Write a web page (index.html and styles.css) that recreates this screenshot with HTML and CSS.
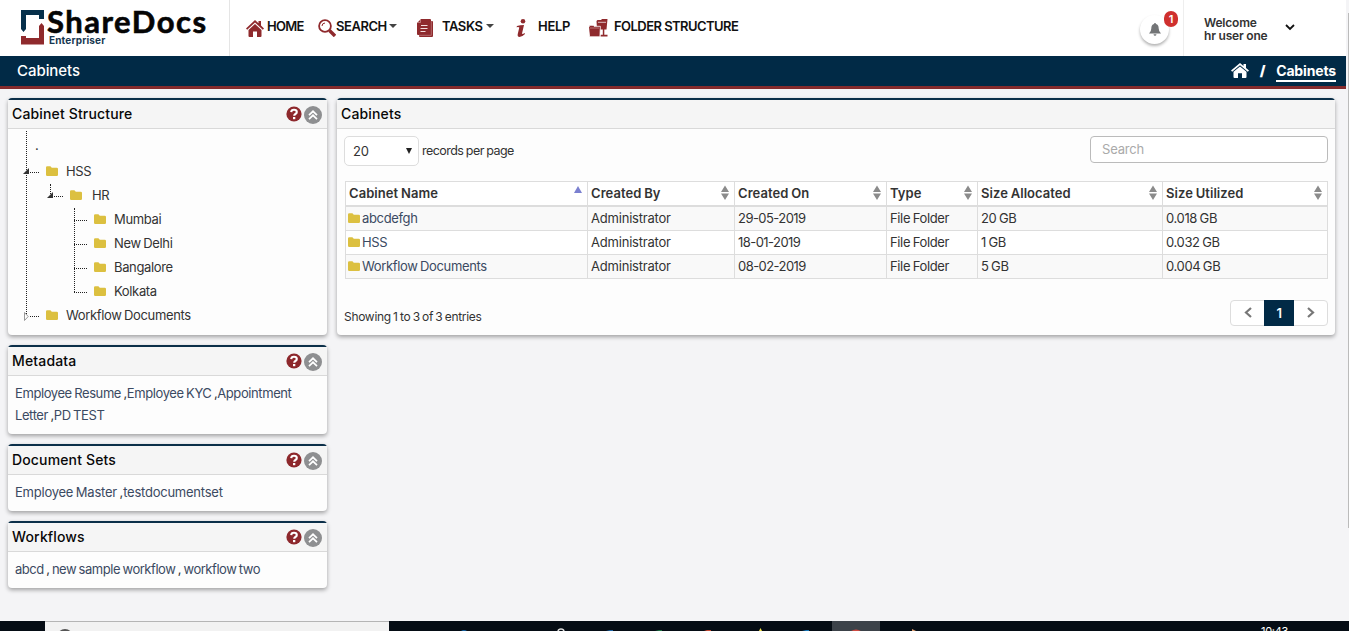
FILE: index.html
```html
<!DOCTYPE html>
<html lang="en">
<head>
	<meta charset="utf-8">
	<title>ShareDocs Enterpriser</title>
	<link rel="stylesheet" href="styles.css">
</head>
<body>
	<!-- shared icons -->
	<svg class="sprite">
		<symbol id="folder" viewBox="0 0 12 10"><path d="M0 1.5Q0 .3 1.2 .3H4.4L5.8 1.7H10.8Q12 1.7 12 2.9V8.8Q12 10 10.8 10H1.2Q0 10 0 8.8Z" fill="#dcc040"/></symbol>
		<symbol id="home" viewBox="0 0 18 17"><path d="M9 0L12.5 3.3V1H15V5.6L18 8.5L16.8 9.8L9 2.6L1.2 9.8L0 8.5Z"/><path d="M9 4L15.5 10V16Q15.5 17 14.5 17H11V11.5H7V17H3.5Q2.5 17 2.5 16V10Z"/></symbol>
		<symbol id="question" viewBox="0 0 16 16"><circle cx="8" cy="8" r="7.6" fill="#8d282c"/><path d="M5.2 6.1Q5.3 3.7 8 3.7T10.8 6Q10.8 7.2 9.4 8Q8.2 8.7 8.2 9.8" fill="none" stroke="#fff" stroke-width="2.1"/><rect x="7" y="11" width="2.3" height="2.2" fill="#fff"/></symbol>
		<symbol id="collapse" viewBox="0 0 18 18"><circle cx="9" cy="9" r="9" fill="#8e8f91"/><path d="M5 9.2L9 5.3L13 9.2M5 13.2L9 9.3L13 13.2" fill="none" stroke="#fff" stroke-width="1.7"/></symbol>
		<symbol id="sort" viewBox="0 0 8 14"><path d="M4 0L8 6.5H0ZM0 8H8L4 14.5Z" fill="#8b8b8b"/></symbol>
	</svg>

	<div class="page">
		<div class="header">
			<div class="logo">
				<svg width="24" height="35" viewBox="0 0 24 35"><path d="M0 0H23V9H18V5H5V19L2.500 22L0 19Z" fill="#06304b"/><path d="M18 16L20.500 13L23 16V34.500H0V26H5V28H18Z" fill="#8f2a2d"/></svg>
				<div>
					<div class="logo-name">ShareDocs</div>
					<div class="logo-sub">Enterpriser</div>
				</div>
			</div>
			<ul class="nav">
				<li><svg class="nav-icon" width="18" height="17"><use href="#home"/></svg><span class="t-home">HOME</span></li>
				<li><svg class="nav-icon" width="18" height="18" viewBox="0 0 18 18"><circle cx="7" cy="7" r="5.9" fill="none" stroke="#8f2a2d" stroke-width="1.8"/><path d="M4 7Q4 4.200 7 4" fill="none" stroke="#8f2a2d"/><path d="M11.500 11.500L17 17" stroke="#8f2a2d" stroke-width="3.400"/></svg><span class="t-search">SEARCH</span><i class="caret"></i></li>
				<li><svg class="nav-icon" width="16" height="18" viewBox="0 0 16 18"><path d="M4 0H13Q14 0 14 1V2H15Q16 2 16 3V17Q16 18 15 18H3Q2 18 2 17V16H1Q0 16 0 15V4Z"/><path d="M14.300 2V16.300H2" fill="none" stroke="#d9a9aa" stroke-width=".5"/><path d="M4 6.500H10.500M3.500 9.500H10.500M3.500 12.500H8.500" fill="none" stroke="#f3dede"/><path d="M3.500 .5V3.500H.5" fill="none" stroke="#d9a9aa" stroke-width=".6"/></svg><span class="t-tasks">TASKS</span><i class="caret"></i></li>
				<li><svg class="nav-icon" width="11" height="18" viewBox="0 0 11 18"><circle cx="7" cy="2.300" r="2.300"/><path d="M1 7Q4 6 8 6L6 14.500Q6.500 15.500 8.500 14L9 15Q6 18 3.500 18Q1.300 18 1.700 15.300L3.300 8.500Q2.500 7.500 .5 8.300Z"/></svg><span class="t-help">HELP</span></li>
				<li><svg class="nav-icon" width="19" height="18" viewBox="0 0 19 18"><path d="M7.500 2L8.500 1H12L13 0H18.500L17.500 10.500H15.300V15.800H18.500V17.500H11.500V15.800H13.800V10.500H8Z"/><path d="M-.4 8.500L.8 6.300H4L5 7.300H11.400L10.900 17.800H.6Z" stroke="#fff" stroke-width=".8"/><path d="M9 3.300H17" stroke="#fff" stroke-width=".7"/><path d="M1 9H10" stroke="#d9a9aa" stroke-width=".6"/></svg><span class="t-folder">FOLDER STRUCTURE</span></li>
			</ul>
			<div class="bell">
				<svg width="12" height="13" viewBox="0 0 12 13"><path d="M6 0Q7 0 7 1Q9.700 1.700 9.700 5.500Q9.700 8.500 12 10.500H0Q2.300 8.500 2.300 5.500Q2.300 1.700 5 1Q5 0 6 0ZM4.500 11.200H7.500Q7.300 12.700 6 12.700T4.500 11.200Z" fill="#737577"/></svg>
				<span class="count">1</span>
			</div>
			<div class="user">
				<div>Welcome<br>hr user one</div>
				<svg width="10" height="7" viewBox="0 0 10 7"><path d="M1 1L5 5L9 1" fill="none" stroke="#111" stroke-width="1.800"/></svg>
			</div>
		</div>

		<div class="titlebar">
			<h1>Cabinets</h1>
			<div class="crumbs">
				<svg width="18" height="15" viewBox="0 0 18 17" preserveAspectRatio="none"><use href="#home"/></svg>
				<b>/</b>
				<a>Cabinets</a>
			</div>
		</div>

		<div class="content">
			<div class="sidebar">
				<div class="card card-tree">
					<div class="card-head"><h2>Cabinet Structure</h2><svg width="16" height="16"><use href="#question"/></svg><svg class="toggle" width="18" height="18"><use href="#collapse"/></svg></div>
					<ul class="tree root">
						<li class="blank">.</li>
						<li><div class="node"><i class="open"></i><i class="dash"></i><svg width="12" height="10"><use href="#folder"/></svg><span>HSS</span></div>
							<ul class="tree single">
								<li><div class="node wide"><i class="open"></i><i class="dash"></i><svg width="12" height="10"><use href="#folder"/></svg><span>HR</span></div>
									<ul class="tree leaves">
										<li><div class="node"><i class="dash"></i><svg width="12" height="10"><use href="#folder"/></svg><span>Mumbai</span></div></li>
										<li><div class="node"><i class="dash"></i><svg width="12" height="10"><use href="#folder"/></svg><span>New Delhi</span></div></li>
										<li><div class="node"><i class="dash"></i><svg width="12" height="10"><use href="#folder"/></svg><span>Bangalore</span></div></li>
										<li><div class="node"><i class="dash"></i><svg width="12" height="10"><use href="#folder"/></svg><span>Kolkata</span></div></li>
									</ul>
								</li>
							</ul>
						</li>
						<li><div class="node"><svg class="closed" width="5" height="9" viewBox="0 0 5 9"><path d="M.5 .5L4.200 4.500L.5 8.500Z" fill="#fff" stroke="#999"/></svg><i class="dash"></i><svg width="12" height="10"><use href="#folder"/></svg><span>Workflow Documents</span></div></li>
					</ul>
				</div>
				<div class="card card-meta">
					<div class="card-head"><h2>Metadata</h2><svg width="16" height="16"><use href="#question"/></svg><svg class="toggle" width="18" height="18"><use href="#collapse"/></svg></div>
					<p><a>Employee Resume</a> ,<a>Employee KYC</a> ,<a>Appointment<br>Letter</a> ,<a>PD TEST</a></p>
				</div>
				<div class="card card-small">
					<div class="card-head"><h2>Document Sets</h2><svg width="16" height="16"><use href="#question"/></svg><svg class="toggle" width="18" height="18"><use href="#collapse"/></svg></div>
					<p class="sets"><a>Employee Master</a> ,<a>testdocumentset</a></p>
				</div>
				<div class="card card-small">
					<div class="card-head"><h2>Workflows</h2><svg width="16" height="16"><use href="#question"/></svg><svg class="toggle" width="18" height="18"><use href="#collapse"/></svg></div>
					<p class="flows"><a>abcd</a> , <a>new sample workflow</a> , <a>workflow two</a></p>
				</div>
			</div>

			<div class="card main">
				<div class="card-head"><h2>Cabinets</h2></div>
				<div class="main-body">
					<div class="tools">
						<div class="select"><span>20</span><i></i></div>
						<label>records per page</label>
						<input class="search" type="text" placeholder="Search">
					</div>
					<table>
						<colgroup><col class="c1"><col class="c2"><col class="c3"><col class="c4"><col class="c5"><col class="c6"></colgroup>
						<tr>
							<th><div>Cabinet Name<i class="sorted"></i></div></th>
							<th><div>Created By<svg width="8" height="15"><use href="#sort"/></svg></div></th>
							<th><div>Created On<svg width="8" height="15"><use href="#sort"/></svg></div></th>
							<th><div>Type<svg width="8" height="15"><use href="#sort"/></svg></div></th>
							<th><div>Size Allocated<svg width="8" height="15"><use href="#sort"/></svg></div></th>
							<th><div>Size Utilized<svg width="8" height="15"><use href="#sort"/></svg></div></th>
						</tr>
						<tr class="odd"><td><svg width="12" height="10"><use href="#folder"/></svg><a>abcdefgh</a></td><td>Administrator</td><td class="date">29-05-2019</td><td>File Folder</td><td>20 GB</td><td>0.018 GB</td></tr>
						<tr><td><svg width="12" height="10"><use href="#folder"/></svg><a>HSS</a></td><td>Administrator</td><td class="date">18-01-2019</td><td>File Folder</td><td>1 GB</td><td>0.032 GB</td></tr>
						<tr class="odd"><td><svg width="12" height="10"><use href="#folder"/></svg><a>Workflow Documents</a></td><td>Administrator</td><td class="date">08-02-2019</td><td>File Folder</td><td>5 GB</td><td>0.004 GB</td></tr>
					</table>
					<div class="table-foot">
						<span>Showing 1 to 3 of 3 entries</span>
						<div class="pager">
							<span><svg width="8" height="11" viewBox="0 0 8 11"><path d="M7 1L2 5.500L7 10" fill="none" stroke="#777" stroke-width="2.200"/></svg></span>
							<span class="active">1</span>
							<span><svg width="8" height="11" viewBox="0 0 8 11"><path d="M1 1L6 5.500L1 10" fill="none" stroke="#777" stroke-width="2.200"/></svg></span>
						</div>
					</div>
				</div>
			</div>
		</div>
	</div>
	<div class="scrollbar"></div>

	<div class="taskbar">
		<div class="task-search"><svg width="20" height="9"><circle cx="10" cy="15" r="7" fill="none" stroke="#555" stroke-width="2"/></svg></div>
		<svg class="task-icons" width="443" height="10">
			<circle cx="75" cy="14" r="5" fill="#1767a8"/>
			<circle cx="172" cy="11" r="3" fill="none" stroke="#ddd" stroke-width="1.500"/>
			<path d="M217 10L221 9H224V10Z" fill="#2166a5"/>
			<path d="M266 10L270 9H273V10Z" fill="#217346"/>
			<path d="M315 10L318 9H322V10Z" fill="#c64b35"/>
			<path d="M370 10L371.500 7L373 10Z" fill="#f6e34b"/>
			<path d="M413 10L417 9H420V10Z" fill="#1777b8"/>
		</svg>
		<div class="task-active"><svg width="48" height="10"><circle cx="24" cy="17" r="8.500" fill="#cf4a42"/></svg></div>
		<svg width="70" height="10"><path d="M32 10L32 8L36 10Z" fill="#e0a070"/></svg>
		<span class="clock">10:43</span>
	</div>
</body>
</html>
```
FILE: styles.css
```css
* {
	box-sizing: border-box;
}
body {
	margin: 0;
	height: 631px;
	overflow: hidden;
	display: grid;
	grid-template-columns: 1346px 3px;
	grid-template-rows: 621px 10px;
	background-color: #f4f4f6;
	font-family: Inter, "Open Sans", sans-serif;
	font-size: 13px;
	letter-spacing: -0.27px;
	word-spacing: -0.8px;
	color: #333;
}
ul {
	list-style: none;
	margin: 0;
	padding: 0;
}
h1, h2, p {
	margin: 0;
	font-weight: 500;
}
svg {
	display: block;
	flex: none;
}
.sprite {
	position: absolute;
	width: 0;
	height: 0;
}

/* top bar */
.header {
	height: 56px;
	background-color: #fff;
	display: flex;
}
.logo {
	width: 230px;
	border-right: 1px solid #e5e5e5;
	padding: 10px 0 0 21px;
	display: flex;
	gap: 4px;
}
.logo-name {
	margin-left: -2px;
	height: 25px;
	font-size: 31px;
	line-height: 22px;
	font-weight: 700;
	font-family: Lato, sans-serif;
	letter-spacing: 1.5px;
	color: #050505;
	-webkit-text-stroke: 0.6px #050505;
}
.logo-sub {
	font-size: 10px;
	line-height: 10px;
	font-weight: 700;
	letter-spacing: 0.15px;
	color: #173750;
}
.nav {
	width: 910px;
	height: 54px;
	padding-left: 16px;
	display: grid;
	grid-template-columns: 72px 99px 99px 73px 160px;
	font-weight: 600;
	font-size: 13px;
	color: #111;
}
.nav li {
	display: flex;
	align-items: center;
	white-space: nowrap;
}
.nav span {
	margin-top: -2px;
	letter-spacing: -0.45px;
}
.nav-icon {
	fill: #8f2a2d;
	margin-top: 2px;
}
.nav .t-home {
	margin-left: 3px;
	letter-spacing: -0.7px;
}
.nav .t-tasks {
	margin-left: 9px;
}
.nav .t-help {
	margin-left: 11px;
	letter-spacing: -0.3px;
}
.nav .t-folder {
	margin-left: 6px;
	letter-spacing: -0.55px;
	word-spacing: 0;
}
.caret {
	margin: -3px 0 0 4px;
	border: 4px solid transparent;
	border-top-color: #444;
	border-bottom: 0;
}
.nav .t-search + .caret {
	margin-left: 2px;
}
.bell {
	position: relative;
	width: 29px;
	height: 29px;
	margin: 15px 0 0 0;
	border-radius: 50%;
	display: flex;
	align-items: center;
	justify-content: center;
	box-shadow: 0 2px 3px rgba(0, 0, 0, 0.3);
}
.count {
	position: absolute;
	left: 24px;
	top: -4px;
	width: 14px;
	height: 16px;
	border-radius: 7px;
	background-color: #cf302e;
	color: #fff;
	font-size: 11px;
	line-height: 16px;
	font-weight: 600;
	text-align: center;
}
.user {
	flex: 1;
	margin-left: 14px;
	border-left: 1px solid #eee;
	padding: 16px 51px 0 20px;
	display: flex;
	justify-content: space-between;
	font-size: 12px;
	line-height: 13px;
	font-weight: 600;
	letter-spacing: -0.2px;
	word-spacing: 0;
}
.user svg {
	margin-top: 8px;
}

.titlebar {
	height: 33px;
	background-color: #012a46;
	border-bottom: 3px solid #842b2d;
	padding: 0 10px 2px 17px;
	display: flex;
	justify-content: space-between;
	align-items: center;
	color: #fff;
}
.titlebar h1 {
	font-size: 15px;
	letter-spacing: -0.05px;
}
.crumbs {
	display: flex;
	align-items: center;
	font-size: 14px;
	font-weight: 700;
}
.crumbs svg {
	fill: #fff;
	margin-top: 1px;
}
.crumbs b {
	margin: 0 11px;
}
.crumbs a {
	line-height: 19px;
	letter-spacing: -0.15px;
	border-bottom: 2px solid #fff;
	margin-top: 2px;
}

/* cards */
.content {
	display: flex;
	align-items: flex-start;
	gap: 10px;
	padding: 9px 11px 0 8px;
}
.sidebar {
	width: 319px;
	display: flex;
	flex-direction: column;
	gap: 10px;
}
.card {
	background-color: #fdfdfd;
	border-top: 2px solid #0b2f49;
	border-radius: 4px;
	box-shadow: 0 2px 4px rgba(0, 0, 0, 0.35);
}
.card-head {
	height: 29px;
	background-color: #f5f5f5;
	border-bottom: 1px solid #d9d9d9;
	padding: 0 5px 0 4px;
	display: flex;
	align-items: center;
	gap: 2px;
}
.card-head h2 {
	flex: 1;
	font-size: 14px;
	line-height: 28px;
	letter-spacing: 0.15px;
	word-spacing: 0;
	color: #080808;
}
.card-head .toggle {
	margin-top: 2px;
}
.card-tree, .main {
	height: 237px;
}
.card-meta {
	height: 89px;
}
.card-small {
	height: 67px;
}
.card p {
	padding: 6px 7px 0;
	line-height: 22px;
	font-weight: 400;
	letter-spacing: -0.41px;
	white-space: nowrap;
}
.card .sets {
	letter-spacing: -0.23px;
}
.card .flows {
	letter-spacing: -0.46px;
}
a {
	color: #3b4a62;
}
.crumbs a {
	color: #fff;
}

/* tree, the dotted guide lines are pseudo elements */
.tree {
	position: relative;
	margin-left: 24px;
}
.tree::before {
	content: "";
	position: absolute;
	left: 0;
	top: 1px;
	bottom: 11px;
	border-left: 1px dotted #222;
}
.tree.root {
	margin-left: 18px;
	padding-top: 2px;
}
.tree.root::before {
	top: 2px;
}
.blank {
	height: 28px;
	padding: 6px 0 0 9px;
}
.single::before {
	bottom: auto;
	height: 12px;
}
.node {
	position: relative;
	height: 24px;
	display: flex;
	align-items: center;
}
.node span {
	margin-left: 8px;
	letter-spacing: -0.35px;
}
.node.wide span {
	margin-left: 10px;
}
.dash {
	width: 9px;
	height: 1px;
	margin: 2px 7px 0 4px;
	border-top: 1px dotted #222;
}
.leaves .dash {
	width: 13px;
	margin-left: 0;
}
.open {
	position: absolute;
	left: -3px;
	top: 9px;
	border-left: 6px solid transparent;
	border-bottom: 6px solid #333;
}
.closed {
	position: absolute;
	left: -2px;
	top: 9px;
}

/* cabinet list */
.main {
	width: 998px;
}
.main-body {
	padding: 7px 7px 0;
}
.tools {
	height: 45px;
	display: flex;
	align-items: flex-start;
}
.select {
	width: 75px;
	height: 30px;
	border: 1px solid #ddd;
	border-radius: 5px;
	background-color: #fff;
	padding: 0 6px 0 8px;
	display: flex;
	align-items: center;
	justify-content: space-between;
}
.select i {
	border: 3px solid transparent;
	border-top: 6px solid #222;
	border-bottom: 0;
}
.tools label {
	margin-left: 3px;
	line-height: 29px;
	font-size: 12.5px;
	letter-spacing: -0.55px;
	word-spacing: -0.5px;
}
.search {
	width: 238px;
	height: 27px;
	margin-left: auto;
	border: 1px solid #bbb;
	border-radius: 4px;
	padding: 0 11px 1px;
	font: inherit;
	letter-spacing: -0.2px;
	background-color: #fff;
}
.search::placeholder {
	color: #aaa;
}
table {
	width: 983px;
	margin-left: 1px;
	table-layout: fixed;
	border-spacing: 0;
	border-top: 1px solid #ddd;
	border-left: 1px solid #ddd;
}
.c1 {
	width: 242px;
}
.c2 {
	width: 147px;
}
.c3 {
	width: 152px;
}
.c4 {
	width: 91px;
}
.c5 {
	width: 185px;
}
.c6 {
	width: 165px;
}
th, td {
	height: 24px;
	padding: 0 3px 2px;
	border-right: 1px solid #ddd;
	border-bottom: 1px solid #ddd;
	text-align: left;
	line-height: 20px;
	white-space: nowrap;
	background-color: #fff;
}
th {
	height: 25px;
	border-bottom-width: 2px;
	padding-right: 5px;
	font-weight: 600;
	letter-spacing: 0.05px;
	word-spacing: -0.5px;
}
td {
	letter-spacing: -0.35px;
}
.date {
	letter-spacing: -0.55px;
}
td:nth-child(2) {
	letter-spacing: -0.2px;
}
th div {
	display: flex;
	justify-content: space-between;
	align-items: center;
}
.sorted {
	margin-bottom: 7px;
	border: 4px solid transparent;
	border-bottom: 7px solid #7b80d0;
	border-top: 0;
}
.odd td {
	background-color: #f9f9f9;
}
td svg {
	display: inline-block;
	margin-right: 2px;
	margin-left: -1px;
}
.table-foot {
	padding-top: 21px;
	display: flex;
	justify-content: space-between;
}
.table-foot > span {
	padding-top: 9px;
	font-size: 12px;
	letter-spacing: -0.3px;
}
.pager {
	height: 26px;
	width: 98px;
	display: grid;
	grid-template-columns: 33px 30px 33px;
	border: 1px solid #ddd;
	border-radius: 4px;
	background-color: #fff;
}
.pager span {
	display: flex;
	align-items: center;
	justify-content: center;
	padding-bottom: 1px;
}
.pager .active {
	margin: -1px 0;
	background-color: #012a46;
	color: #fff;
	font-weight: 600;
}

.scrollbar {
	width: 1px;
	height: 515px;
	margin: 13px 0 0 2px;
	background-color: #bbb;
}

/* desktop strip */
.taskbar {
	grid-column: 1 / 3;
	height: 10px;
	overflow: hidden;
	background-color: #050c14;
	padding-left: 45px;
	display: flex;
}
.task-search {
	width: 344px;
	padding-left: 10px;
	background-color: #f2f2f2;
	border-top: 1px solid #b5b5b5;
}
.task-active {
	width: 48px;
	background-color: #3c4249;
}
.clock {
	margin: 4px 0 0 311px;
	font-size: 11px;
	line-height: 13px;
	color: #fff;
}
```
